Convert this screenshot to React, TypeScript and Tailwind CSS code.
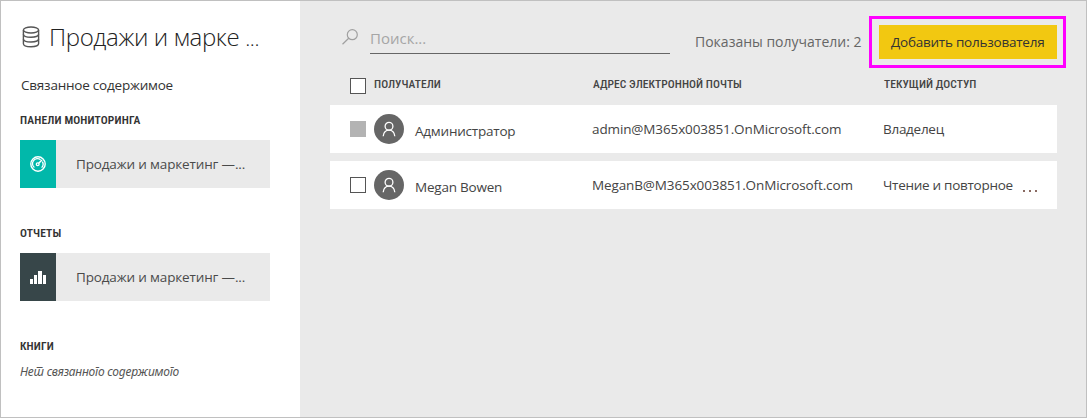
import type { ReactNode } from "react";

function DatabaseIcon() {
  return (
    <svg className="h-[22px] w-[18px] shrink-0" viewBox="0 0 18 22" fill="none" stroke="#555555" strokeWidth="1.4">
      <ellipse cx="9" cy="4" rx="7.6" ry="3" />
      <path d="M1.400 4v13.700c0 1.700 3.400 3 7.600 3s7.600-1.300 7.600-3V4" />
      <path d="M1.4 8.3c0 1.700 3.400 3 7.600 3s7.600-1.300 7.600-3M1.400 13c0 1.700 3.400 3 7.600 3s7.600-1.300 7.600-3" />
    </svg>
  );
}

function SearchIcon() {
  return (
    <svg className="h-4 w-4 shrink-0" viewBox="0 0 16 16" fill="none" stroke="#a0a0a0" strokeWidth="1.2">
      <circle cx="10.3" cy="5.7" r="5" />
      <path d="M6.7 9.3L0.5 15.3" />
    </svg>
  );
}

function GaugeIcon() {
  return (
    <svg className="h-4 w-4" viewBox="0 0 16 16" fill="none" stroke="#ffffff">
      <circle cx="8" cy="8" r="7.2" strokeWidth="1.4" />
      <path d="M4.4 11.6A5 5 0 0 1 10.6 3.7M12.4 5.6A5 5 0 0 1 11.6 11.6" strokeWidth="1.3" />
      <circle cx="7.7" cy="8.3" r="1.4" strokeWidth="1.3" />
      <path d="M8.7 7.3L12 4" strokeWidth="1.5" />
    </svg>
  );
}

function BarsIcon() {
  return (
    <svg className="mt-px h-[13px] w-4" viewBox="0 0 16 13" fill="#ffffff" shapeRendering="crispEdges">
      <path d="M0 8h3v5H0zM4 4h3v9H4zM8 0h4v13H8zM13 4h3v9h-3z" />
    </svg>
  );
}

function Avatar() {
  return (
    <div className="ml-2 flex h-[30px] w-[30px] shrink-0 items-center justify-center rounded-full bg-[#666666]">
      <svg className="h-4 w-4" viewBox="0 0 16 16" fill="none" stroke="#ffffff" strokeWidth="1.3">
        <circle cx="8" cy="5.2" r="3.9" />
        <path d="M2.2 15.2c.4-3.6 2.8-6.1 5.8-6.1s5.4 2.5 5.8 6.1" />
      </svg>
    </div>
  );
}

function SideHeading({ children }: { children: ReactNode }) {
  return (
    <h2 className="h-4 whitespace-nowrap font-['Roboto',sans-serif] text-[11.5px] leading-[14px] font-semibold font-stretch-condensed tracking-[0.15px] text-[#333333]">
      {children}
    </h2>
  );
}

function ContentTile({ color, icon }: { color: string; icon: ReactNode }) {
  return (
    <div className="flex h-12 w-[250px] items-center bg-[#eaeaea]">
      <div className={`flex h-12 w-9 shrink-0 items-center justify-center ${color}`}>{icon}</div>
      <span className="ml-5 whitespace-nowrap text-[13.5px] tracking-[-0.15px] text-[#4a4a4a]">Продажи и маркетинг —...</span>
    </div>
  );
}

function Recipient({ name, email, access, disabled, more }: {
  name: ReactNode;
  email: ReactNode;
  access: ReactNode;
  disabled?: boolean;
  more?: boolean;
}) {
  return (
    <div className="flex h-12 w-[727px] items-center bg-white text-[13.5px] leading-5 tracking-[-0.12px] whitespace-nowrap text-[#444444]">
      <div className={disabled ? "ml-5 h-4 w-4 bg-[#b3b3b3]" : "ml-5 h-4 w-4 border border-[#555555] bg-white"} />
      <Avatar />
      <div className="ml-[11px] w-[177px] pt-1 tracking-[-0.22px]">{name}</div>
      <div className="w-[291px]">{email}</div>
      <div className="w-[140px] tracking-[-0.28px]">{access}</div>
      {more && (
        <div className="mt-3 flex gap-1">
          <i className="h-0.5 w-0.5 bg-[#8a6a62]" />
          <i className="h-0.5 w-0.5 bg-[#8a6a62]" />
          <i className="h-0.5 w-0.5 bg-[#8a6a62]" />
        </div>
      )}
    </div>
  );
}

export default function App() {
  return (
    <div className="flex h-[418px] w-[1087px] overflow-hidden border border-[#c0c0c0] bg-[#eaeaea] font-['Open_Sans','Noto_Sans',sans-serif]">
      <aside className="h-full w-[299px] shrink-0 bg-white pl-[19px]">
        <div className="mt-[18px] flex h-9 items-center pl-[2px]">
          <DatabaseIcon />
          <h1 className="mt-px ml-[9px] whitespace-nowrap text-[24px] leading-9 font-light tracking-[-0.38px] text-[#222222]">
            <span>Продажи и марке</span><span className="ml-1.5 text-[21px]">...</span>
          </h1>
        </div>
        <p className="mt-5 h-5 whitespace-nowrap pl-px text-[13.5px] leading-5 tracking-[-0.22px] text-[#333333]">Связанное содержимое</p>
        <div className="mt-[18px] mb-[11px]">
          <SideHeading>ПАНЕЛИ МОНИТОРИНГА</SideHeading>
        </div>
        <ContentTile color="bg-[#01b8aa]" icon={<GaugeIcon />} />
        <div className="mt-[38px] mb-[11px]">
          <SideHeading>ОТЧЕТЫ</SideHeading>
        </div>
        <ContentTile color="bg-[#374649]" icon={<BarsIcon />} />
        <div className="mt-[38px]">
          <SideHeading>КНИГИ</SideHeading>
        </div>
        <p lang="sr" className="mt-[7px] whitespace-nowrap text-[12px] leading-5 tracking-[-0.23px] text-[#555555] italic font-['Noto_Sans',sans-serif]">
          Нет связанного содержимого
        </p>
      </aside>
      <main className="flex min-w-0 flex-1 flex-col pl-[30px]">
        <div className="flex h-[67px] items-start">
          <div className="mt-7 ml-3"><SearchIcon /></div>
          <div className="mt-[25px] ml-3 h-7 w-[300px] border-b border-[#666666] text-[15px] leading-[25px] text-[#a6a6a6]">Поиск...</div>
          <div className="mt-[30px] ml-[25px] w-[174px] whitespace-nowrap text-[14px] leading-[22px] text-[#666666]">Показаны получатели: 2</div>
          <div className="mt-[15px] h-[52px] w-[197px] shrink-0 border-3 border-[#ff00ff] p-[6px] pl-[7px]">
            <button className="block h-[34px] w-[178px] bg-[#f2c811] pl-3 text-left whitespace-nowrap text-[13.5px] leading-[34px] tracking-[-0.23px] text-[#333333]">
              Добавить пользователя
            </button>
          </div>
        </div>
        <div className="flex h-[37px] items-start pt-[10px] pl-5 whitespace-nowrap font-['Roboto',sans-serif] text-[11.5px] leading-3 font-medium font-stretch-condensed tracking-[0.06px] text-[#444444]">
          <div className="h-4 w-4 border border-[#555555] bg-white" />
          <div className="ml-2 w-[219px]">ПОЛУЧАТЕЛИ</div>
          <div className="w-[291px]">АДРЕС ЭЛЕКТРОННОЙ ПОЧТЫ</div>
          <div>ТЕКУЩИЙ ДОСТУП</div>
        </div>
        <div className="flex flex-col gap-2">
          <Recipient name="Администратор" email="admin@M365x003851.OnMicrosoft.com" access="Владелец" disabled />
          <Recipient name="Megan Bowen" email="MeganB@M365x003851.OnMicrosoft.com" access="Чтение и повторное" more />
        </div>
      </main>
    </div>
  );
}
